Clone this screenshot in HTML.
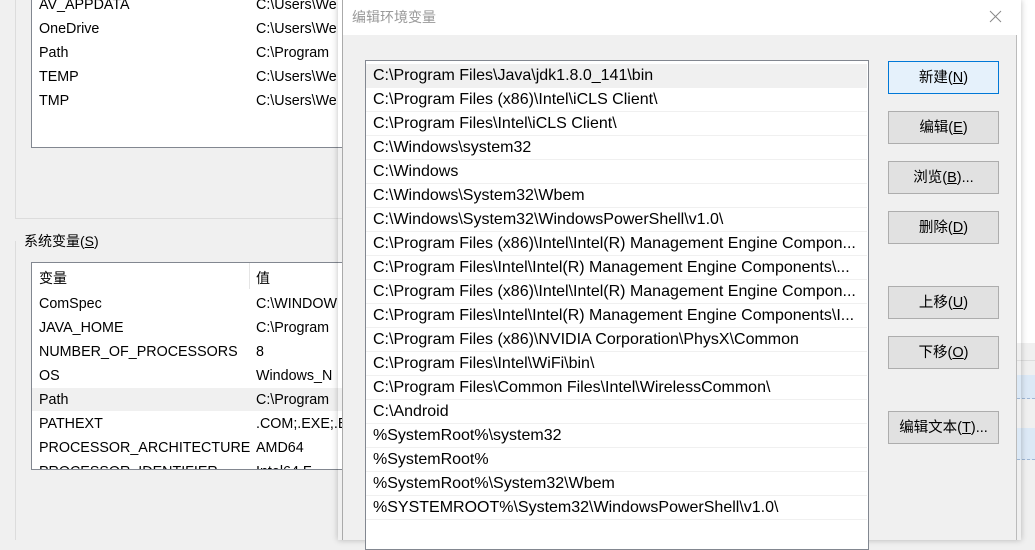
<!DOCTYPE html>
<html><head><meta charset="utf-8"><style>
*{margin:0;padding:0;box-sizing:border-box}
body{width:1035px;height:540px;overflow:hidden;background:#f0f0f0;position:relative;font-family:"Liberation Sans","Noto Sans CJK SC",sans-serif;font-size:15px;color:#000}
.abs{position:absolute}
.t{position:absolute;white-space:nowrap;line-height:24px}
.lb{position:absolute;background:#fff;border:1px solid #828790;overflow:hidden;font-size:14.3px}
.btn{position:absolute;left:888px;width:111px;height:33px;background:#e1e1e1;border:1px solid #adadad;text-align:center;line-height:33px;font-size:14.5px}
.row{height:24px;line-height:24px;padding-left:7px;border-bottom:1px solid #f0f0f0;white-space:nowrap;overflow:hidden;width:501px;font-size:16px}
u{text-decoration:underline}
</style></head><body>
<div class="abs" style="left:15px;top:0;width:1px;height:218px;background:#dcdcdc"></div>
<div class="abs" style="left:15px;top:218px;width:330px;height:1px;background:#dcdcdc"></div>
<div class="abs" style="left:15px;top:241px;width:1px;height:299px;background:#dcdcdc"></div>
<div class="lb" style="left:31px;top:-2px;width:320px;height:150px">
 <div class="t" style="left:7px;top:-6px">AV_APPDATA</div><div class="t" style="left:224px;top:-6px">C:\Users\We</div>
 <div class="t" style="left:7px;top:18px">OneDrive</div><div class="t" style="left:224px;top:18px">C:\Users\We</div>
 <div class="t" style="left:7px;top:42px">Path</div><div class="t" style="left:224px;top:42px">C:\Program</div>
 <div class="t" style="left:7px;top:66px">TEMP</div><div class="t" style="left:224px;top:66px">C:\Users\We</div>
 <div class="t" style="left:7px;top:90px">TMP</div><div class="t" style="left:224px;top:90px">C:\Users\We</div>
</div>
<div class="t" style="left:24px;top:229px;background:#f0f0f0;font-size:14px">系统变量(<u>S</u>)</div>
<div class="lb" style="left:31px;top:262px;width:320px;height:208px">
 <div class="abs" style="left:217px;top:0;width:1px;height:26px;background:#e5e5e5"></div>
 <div class="t" style="left:7px;top:3px;font-size:14px">变量</div><div class="t" style="left:224px;top:3px;font-size:14px">值</div>
 <div class="abs" style="left:0;top:125px;width:320px;height:23px;background:#f0f0f0"></div>
 <div class="t" style="left:7px;top:29px">ComSpec</div><div class="t" style="left:224px;top:29px">C:\WINDOW</div>
 <div class="t" style="left:7px;top:53px">JAVA_HOME</div><div class="t" style="left:224px;top:53px">C:\Program</div>
 <div class="t" style="left:7px;top:77px">NUMBER_OF_PROCESSORS</div><div class="t" style="left:224px;top:77px">8</div>
 <div class="t" style="left:7px;top:101px">OS</div><div class="t" style="left:224px;top:101px">Windows_N</div>
 <div class="t" style="left:7px;top:125px">Path</div><div class="t" style="left:224px;top:125px">C:\Program</div>
 <div class="t" style="left:7px;top:149px">PATHEXT</div><div class="t" style="left:224px;top:149px">.COM;.EXE;.B</div>
 <div class="t" style="left:7px;top:173px">PROCESSOR_ARCHITECTURE</div><div class="t" style="left:224px;top:173px">AMD64</div>
 <div class="t" style="left:7px;top:197px">PROCESSOR_IDENTIFIER</div><div class="t" style="left:224px;top:197px">Intel64 F</div>
</div>
<div class="abs" style="left:1017px;top:0;width:18px;height:343px;background:#fff"></div>
<div class="abs" style="left:1017px;top:343px;width:18px;height:18px;background:#f0f0f0;border-bottom:1px solid #ddd"></div>
<div class="abs" style="left:1017px;top:375px;width:18px;height:24px;background:#dce9f6;border-bottom:1px dashed #9fb7d4"></div>
<div class="abs" style="left:1017px;top:428px;width:18px;height:32px;background:#dce9f6;border-bottom:1px dashed #9fb7d4"></div>
<div class="abs" style="left:338px;top:0;width:683px;height:540px;box-shadow:0 0 6px rgba(0,0,0,.25)"></div>
<div class="abs" style="left:342px;top:0;width:675px;height:540px;background:#f0f0f0;border-left:1px solid #aaa;border-right:1px solid #bbb">
 <div class="abs" style="left:0;top:0;width:674px;height:35px;background:#fff"></div>
 <div class="t" style="left:9px;top:5px;color:#999;font-size:14px">编辑环境变量</div>
 <svg class="abs" style="left:646px;top:10px" width="13" height="13"><path d="M1 1L12 12M12 1L1 12" stroke="#888" stroke-width="1"/></svg>
</div>
<div class="lb" style="left:365px;top:60px;width:504px;height:490px;padding-top:3px">
 <div class="row" style="background:#f0f0f0">C:\Program Files\Java\jdk1.8.0_141\bin</div>
 <div class="row">C:\Program Files (x86)\Intel\iCLS Client\</div>
 <div class="row">C:\Program Files\Intel\iCLS Client\</div>
 <div class="row">C:\Windows\system32</div>
 <div class="row">C:\Windows</div>
 <div class="row">C:\Windows\System32\Wbem</div>
 <div class="row">C:\Windows\System32\WindowsPowerShell\v1.0\</div>
 <div class="row">C:\Program Files (x86)\Intel\Intel(R) Management Engine Compon...</div>
 <div class="row">C:\Program Files\Intel\Intel(R) Management Engine Components\...</div>
 <div class="row">C:\Program Files (x86)\Intel\Intel(R) Management Engine Compon...</div>
 <div class="row">C:\Program Files\Intel\Intel(R) Management Engine Components\I...</div>
 <div class="row">C:\Program Files (x86)\NVIDIA Corporation\PhysX\Common</div>
 <div class="row">C:\Program Files\Intel\WiFi\bin\</div>
 <div class="row">C:\Program Files\Common Files\Intel\WirelessCommon\</div>
 <div class="row">C:\Android</div>
 <div class="row">%SystemRoot%\system32</div>
 <div class="row">%SystemRoot%</div>
 <div class="row">%SystemRoot%\System32\Wbem</div>
 <div class="row">%SYSTEMROOT%\System32\WindowsPowerShell\v1.0\</div>
</div>
<div class="btn" style="top:61px;background:#e5f1fb;border-color:#0078d7">新建(<u>N</u>)</div>
<div class="btn" style="top:111px">编辑(<u>E</u>)</div>
<div class="btn" style="top:161px">浏览(<u>B</u>)...</div>
<div class="btn" style="top:211px">删除(<u>D</u>)</div>
<div class="btn" style="top:286px">上移(<u>U</u>)</div>
<div class="btn" style="top:336px">下移(<u>O</u>)</div>
<div class="btn" style="top:411px">编辑文本(<u>T</u>)...</div>
</body></html>
